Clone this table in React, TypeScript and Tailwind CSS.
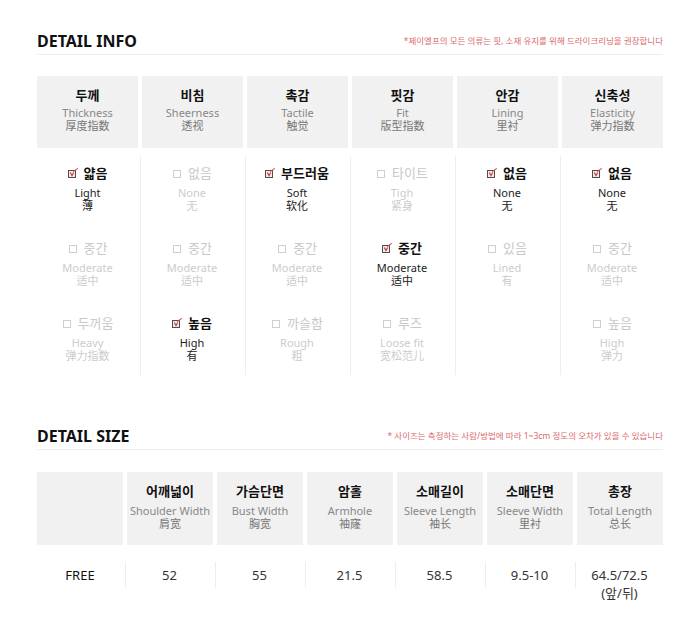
const font = "font-['Noto_Sans','Noto_Sans_CJK_KR','Noto_Sans_CJK_SC',sans-serif]";

type Opt = { ko: string; en: string; zh: string; on?: boolean } | null;

const infoCols: { ko: string; en: string; zh: string; opts: Opt[] }[] = [
  {
    ko: "두께",
    en: "Thickness",
    zh: "厚度指数",
    opts: [
      { ko: "얇음", en: "Light", zh: "薄", on: true },
      { ko: "중간", en: "Moderate", zh: "适中" },
      { ko: "두꺼움", en: "Heavy", zh: "弹力指数" },
    ],
  },
  {
    ko: "비침",
    en: "Sheerness",
    zh: "透视",
    opts: [
      { ko: "없음", en: "None", zh: "无" },
      { ko: "중간", en: "Moderate", zh: "适中" },
      { ko: "높음", en: "High", zh: "有", on: true },
    ],
  },
  {
    ko: "촉감",
    en: "Tactile",
    zh: "触觉",
    opts: [
      { ko: "부드러움", en: "Soft", zh: "软化", on: true },
      { ko: "중간", en: "Moderate", zh: "适中" },
      { ko: "까슬함", en: "Rough", zh: "粗" },
    ],
  },
  {
    ko: "핏감",
    en: "Fit",
    zh: "版型指数",
    opts: [
      { ko: "타이트", en: "Tigh", zh: "紧身" },
      { ko: "중간", en: "Moderate", zh: "适中", on: true },
      { ko: "루즈", en: "Loose fit", zh: "宽松范儿" },
    ],
  },
  {
    ko: "안감",
    en: "Lining",
    zh: "里衬",
    opts: [
      { ko: "없음", en: "None", zh: "无", on: true },
      { ko: "있음", en: "Lined", zh: "有" },
      null,
    ],
  },
  {
    ko: "신축성",
    en: "Elasticity",
    zh: "弹力指数",
    opts: [
      { ko: "없음", en: "None", zh: "无", on: true },
      { ko: "중간", en: "Moderate", zh: "适中" },
      { ko: "높음", en: "High", zh: "弹力" },
    ],
  },
];

const sizeCols = [
  { ko: "어깨넓이", en: "Shoulder Width", zh: "肩宽", v: "52" },
  { ko: "가슴단면", en: "Bust Width", zh: "胸宽", v: "55" },
  { ko: "암홀", en: "Armhole", zh: "袖窿", v: "21.5" },
  { ko: "소매길이", en: "Sleeve Length", zh: "袖长", v: "58.5" },
  { ko: "소매단면", en: "Sleeve Width", zh: "里衬", v: "9.5-10" },
  { ko: "총장", en: "Total Length", zh: "总长", v: "64.5/72.5\n(앞/뒤)" },
];

function Checked() {
  return (
    <svg width="11" height="11" viewBox="0 0 11 11" className="shrink-0">
      <rect x="0.5" y="2.5" width="7" height="7" fill="#f6eaea" stroke="#5a4a4a" />
      <path d="M2.3 4.6 L4 7.6 L5.7 4.6" fill="none" stroke="#c0393b" strokeWidth="1.1" />
      <path d="M5.2 3.6 L9.8 0.4" fill="none" stroke="#d24a4c" strokeWidth="1.1" />
    </svg>
  );
}

function Unchecked() {
  return (
    <svg width="11" height="11" viewBox="0 0 11 11" className="shrink-0">
      <rect x="1.5" y="2.5" width="7" height="7" fill="none" stroke="#cfcfcf" />
    </svg>
  );
}

function Title({ text, note }: { text: string; note: string }) {
  return (
    <div className="flex items-center justify-between h-[24px] pb-[3px] border-b border-[#eeeeee]">
      <h2 className="text-[16px] leading-[20px] font-bold text-[#111]">{text}</h2>
      <span className="text-[8.5px] leading-[12px] text-[#d96b6b]">{note}</span>
    </div>
  );
}

function HeadCell({ ko, en, zh, tall }: { ko: string; en: string; zh: string; tall?: boolean }) {
  return (
    <div className={`bg-[#f1f1f1] flex flex-col items-center pt-[10px] ${tall ? "h-[73px]" : "h-[72px]"}`}>
      <div className="text-[13px] leading-[18px] font-bold text-[#111]">{ko}</div>
      <div className={`text-[11px] leading-[13px] text-[#888] ${tall ? "mt-[4px]" : "mt-[2px]"}`}>{en}</div>
      <div className="text-[11px] leading-[13px] text-[#777]">{zh}</div>
    </div>
  );
}

export default function App() {
  return (
    <div className={`${font} bg-white w-[700px] h-[625px]`}>
      <div className="w-[626px] mx-auto pt-[31px]">
        <Title text="DETAIL INFO" note="*제이엘프의 모든 의류는 핏, 소재 유지를 위해 드라이크리닝을 권장합니다" />

        <div className="grid grid-cols-6 gap-x-[4px] mt-[21px]">
          {infoCols.map((c) => (
            <HeadCell key={c.en} ko={c.ko} en={c.en} zh={c.zh} />
          ))}
        </div>

        <div className="grid grid-cols-6 gap-x-[4px] mt-[8px]">
          {infoCols.map((c, i) => (
            <div key={c.en} className={`flex flex-col h-[219px] ${i > 0 ? "border-l border-[#eeeeee] -ml-[2px]" : ""}`}>
              {c.opts.map((o, j) => (
                <div key={j} className="h-[75px] shrink-0 flex flex-col items-center pt-[8px]">
                  {o && (
                    <>
                      <div className={`flex items-center gap-[5px] text-[13px] leading-[18px] ${o.on ? "font-bold text-[#111]" : "text-[#c8c8c8]"}`}>
                        {o.on ? <Checked /> : <Unchecked />}
                        <span>{o.ko}</span>
                      </div>
                      <div className={`mt-[4px] text-[11px] leading-[13px] ${o.on ? "text-[#222]" : "text-[#cccccc]"}`}>{o.en}</div>
                      <div className={`text-[11px] leading-[13px] ${o.on ? "text-[#222]" : "text-[#cccccc]"}`}>{o.zh}</div>
                    </>
                  )}
                </div>
              ))}
            </div>
          ))}
        </div>

        <div className="mt-[51px]">
          <Title text="DETAIL SIZE" note="* 사이즈는 측정하는 사람/방법에 따라 1~3cm 정도의 오차가 있을 수 있습니다" />
        </div>

        <div className="grid grid-cols-7 gap-x-[4px] mt-[22px]">
          <div className="bg-[#f1f1f1] h-[73px]" />
          {sizeCols.map((c) => (
            <HeadCell key={c.en} ko={c.ko} en={c.en} zh={c.zh} tall />
          ))}
        </div>

        <div className="grid grid-cols-7 gap-x-[4px] mt-[17px]">
          <div className="h-[26px] pt-[4px] text-center text-[13px] leading-[18px] text-[#111]">FREE</div>
          {sizeCols.map((c) => (
            <div key={c.en} className="h-[26px] -ml-[2px] border-l border-[#eeeeee] pt-[4px] text-center text-[13px] leading-[18px] text-[#333] whitespace-pre-line">
              {c.v}
            </div>
          ))}
        </div>
      </div>
    </div>
  );
}
